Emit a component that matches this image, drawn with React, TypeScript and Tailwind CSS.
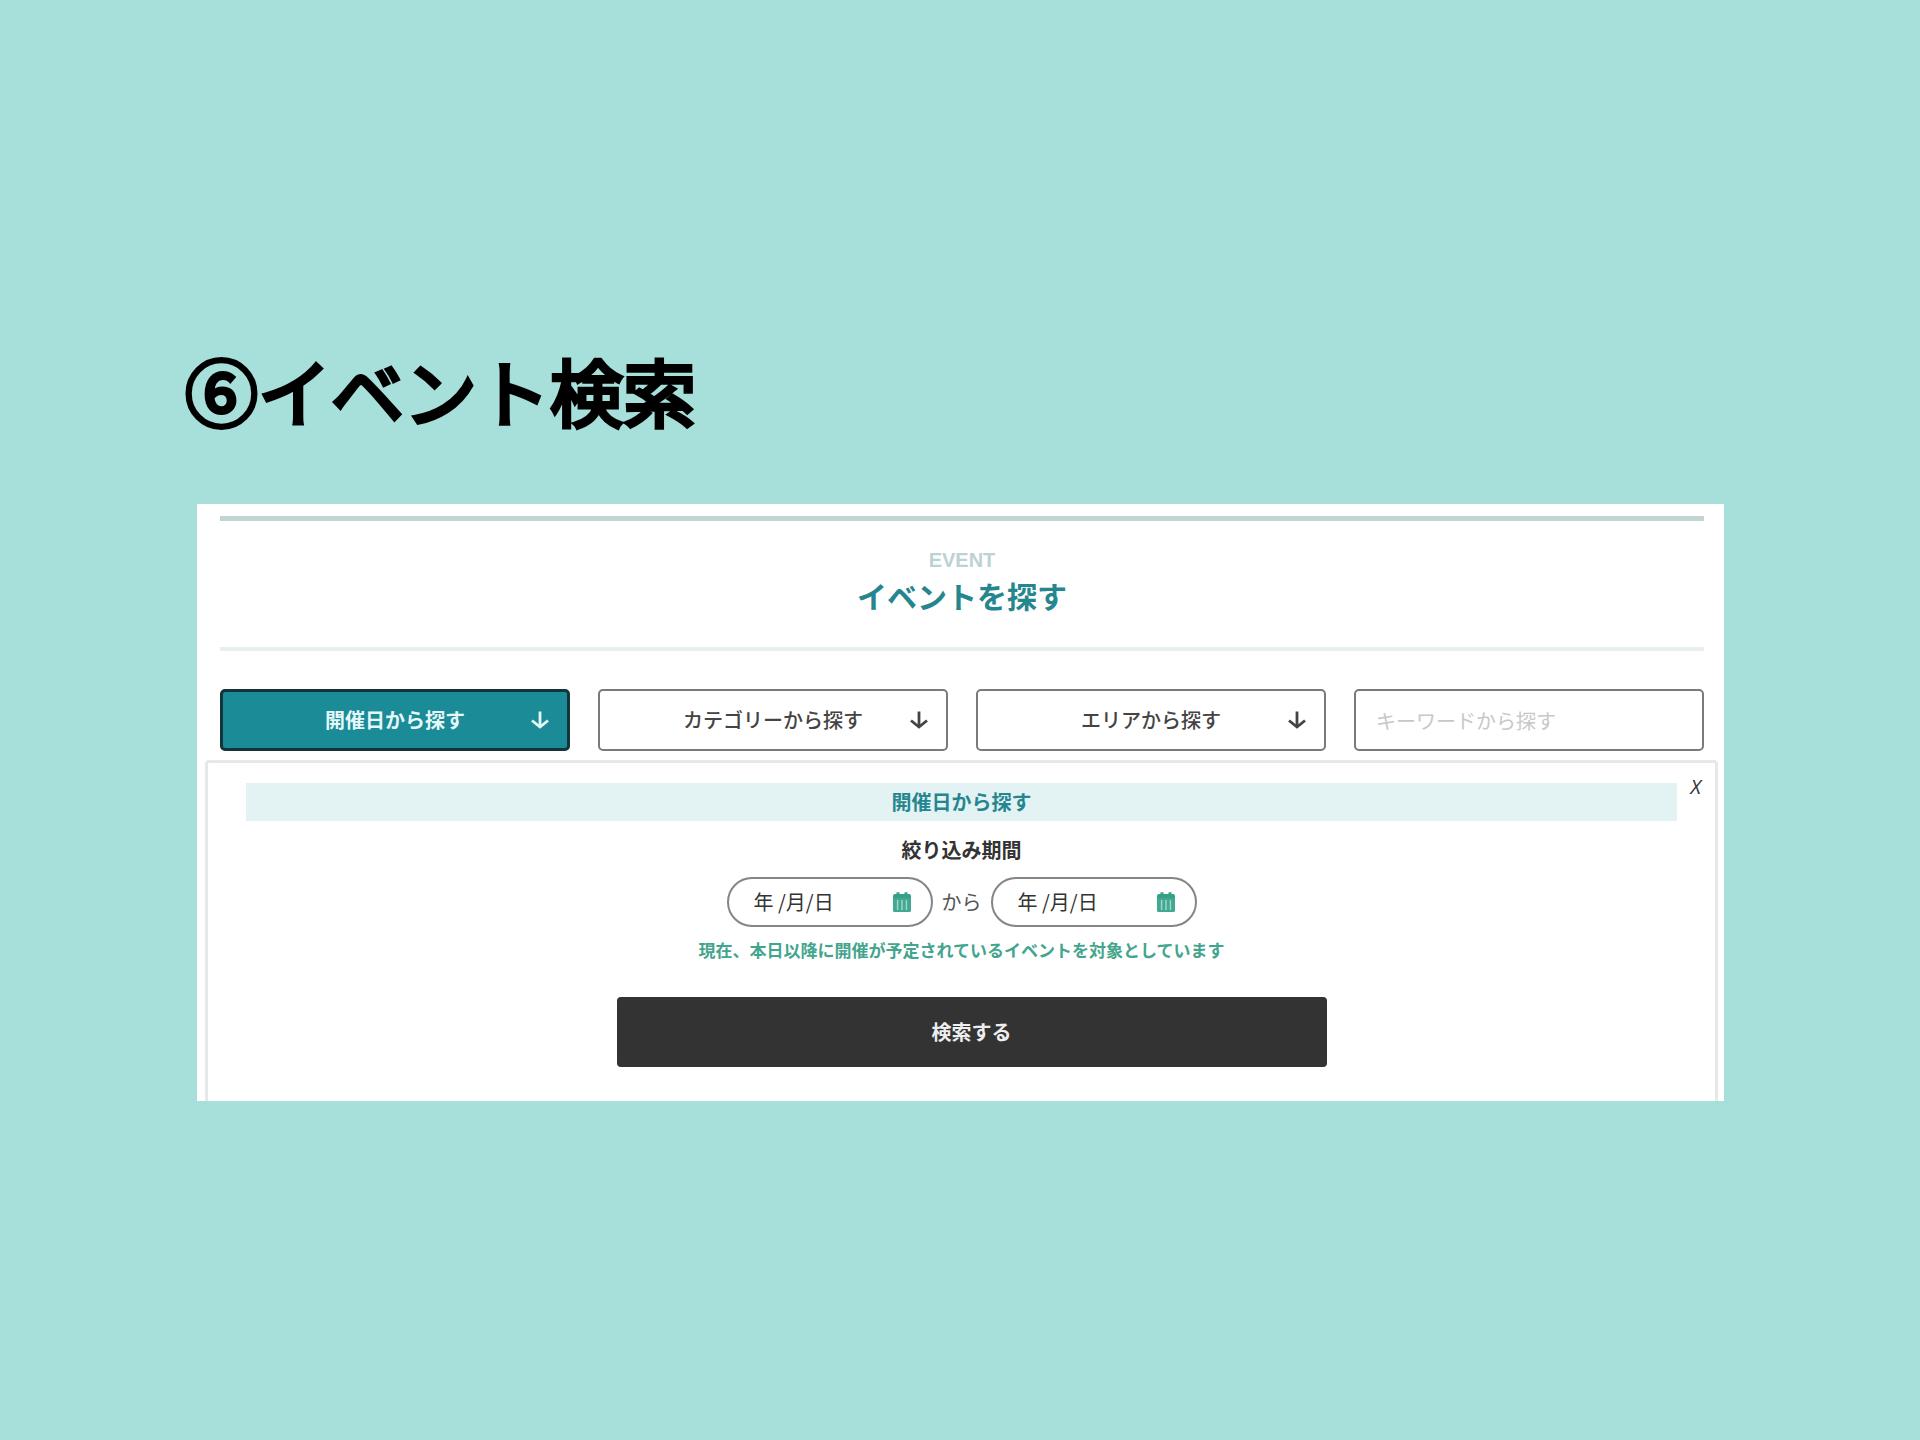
import { useState } from "react";

const filters = ["開催日から探す", "カテゴリーから探す", "エリアから探す"];

function ArrowDown() {
  return (
    <svg
      viewBox="0 0 18 18"
      className="absolute right-[18px] top-1/2 size-[18px] -translate-y-1/2"
      fill="none"
      stroke="currentColor"
      strokeWidth="2.8"
      aria-hidden="true"
    >
      <path d="M9 0.5V16" />
      <path d="M1 9.5L9 16L17 9.5" />
    </svg>
  );
}

function CalendarIcon() {
  return (
    <svg viewBox="0 0 20 22" className="h-[22px] w-5" aria-hidden="true">
      <path
        d="M1 5a2 2 0 0 1 2-2h1.5V1.2h3V3h5V1.2h3V3H17a2 2 0 0 1 2 2v3H1z"
        fill="#34a088"
      />
      <rect x="1" y="7" width="18" height="14" rx="1.5" fill="#43a88f" />
      <path
        d="M5.6 9v10M10 9v10M14.4 9v10"
        stroke="#98d6c6"
        strokeWidth="1.5"
      />
    </svg>
  );
}

function DateField({ label }: { label: string }) {
  return (
    <div className="flex h-[50px] w-[206px] items-center rounded-full border-2 border-[#858585] bg-white pl-[25px] pr-[19px]">
      <input
        type="text"
        aria-label={label}
        placeholder="年 /月/日"
        className="h-7 w-full min-w-0 flex-1 bg-transparent text-[20px] leading-7 text-[#333333] outline-none placeholder:text-[#333333]"
      />
      <button type="button" aria-label={`${label}を選択`} className="shrink-0">
        <CalendarIcon />
      </button>
    </div>
  );
}

export default function App() {
  const [active, setActive] = useState(0);
  const [open, setOpen] = useState(true);

  return (
    <main className="min-h-screen bg-[#a7dfda] pb-20 pt-[349px] font-['Noto_Sans_CJK_JP',sans-serif] text-[#333333]">
      <h1 className="px-[185px] text-[73px] font-normal leading-[80px] text-black [-webkit-text-stroke:4px_black] [stroke-linejoin:round]">
        ⑥イベント検索
      </h1>

      <section className="ml-[197px] mr-[196px] mt-[75px] bg-white pt-3">
        <header className="ml-[23px] mr-5 border-b-4 border-t-[5px] border-b-[#e8efee] border-t-[#c2d5d3] pb-8 pt-[27px] text-center">
          <p className="font-['Liberation_Sans',sans-serif] text-[20px] font-bold leading-6 text-[#bdd2d3]">
            EVENT
          </p>
          <h2 className="mt-[5px] pb-[2px] text-[30px] font-bold leading-9 text-[#258690]">
            イベントを探す
          </h2>
        </header>

        <div className="ml-[23px] mr-5 mt-[38px] grid grid-cols-4 gap-7">
          {filters.map((name, i) => (
            <button
              key={name}
              type="button"
              onClick={() => {
                setActive(i);
                setOpen(true);
              }}
              className={
                i === active
                  ? "relative h-[62px] rounded-[5px] border-[3px] border-[#12343a] bg-[#1b8b97] text-[20px] font-bold leading-7 text-[#e4f8f9]"
                  : "relative h-[62px] rounded-[5px] border-2 border-[#7a7a7a] bg-white text-[20px] font-medium leading-7 text-[#444444]"
              }
            >
              {name}
              <ArrowDown />
            </button>
          ))}
          <input
            type="search"
            aria-label="キーワードから探す"
            placeholder="キーワードから探す"
            className="h-[62px] min-w-0 rounded-[5px] border-2 border-[#7a7a7a] bg-white px-5 text-[20px] leading-7 outline-none placeholder:text-[#c8c8c8]"
          />
        </div>

        {open && (
          <form
            onSubmit={(e) => e.preventDefault()}
            className="relative ml-2 mr-[6px] mt-[9px] rounded-t-[4px] border-x-[3px] border-t-[3px] border-[#e8e8e8] px-[38px] pb-[34px] pt-5"
          >
            <button
              type="button"
              aria-label="閉じる"
              onClick={() => setOpen(false)}
              className="absolute right-[14px] top-3 font-['Open_Sans',sans-serif] text-[20px] font-medium italic leading-6"
            >
              X
            </button>
            <h3 className="bg-[#e3f2f2] text-center text-[20px] font-bold leading-[38px] text-[#258690]">
              {filters[active]}
            </h3>
            <p className="mt-[15px] text-center text-[20px] font-bold leading-7">
              絞り込み期間
            </p>
            <div className="mt-[13px] flex items-center justify-center">
              <DateField label="開始日" />
              <span className="px-[9px] text-[20px] leading-7 text-[#555555]">
                から
              </span>
              <DateField label="終了日" />
            </div>
            <p className="mt-[10px] text-center text-[17px] font-bold leading-[26px] text-[#43a58d]">
              現在、本日以降に開催が予定されているイベントを対象としています
            </p>
            <div className="mt-[34px] flex justify-center pl-5">
              <button
                type="submit"
                className="h-[70px] w-[710px] rounded-[4px] bg-[#333333] text-[20px] font-bold leading-7 text-[#eeeeee]"
              >
                検索する
              </button>
            </div>
          </form>
        )}
      </section>
    </main>
  );
}
